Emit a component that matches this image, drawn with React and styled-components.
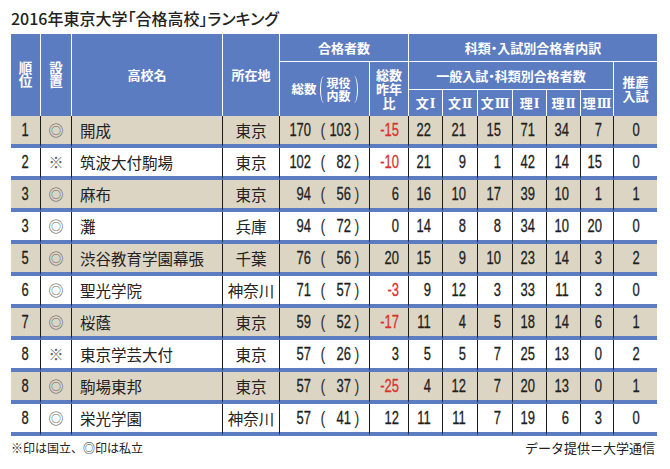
import React from "react";
import styled, { createGlobalStyle } from "styled-components";

const BLUE = "#5b7cc0";
const BEIGE = "#ddd5c4";
const JP = `"Noto Sans CJK JP", "Noto Sans", sans-serif`;
const NUM = `"Liberation Sans", Arial, sans-serif`;

const GlobalStyle = createGlobalStyle`
  body {
    margin: 0;
    background: #fff;
    font-family: ${JP};
  }
`;

const widths = [30, 31, 151, 57, 90, 39, 34, 35, 35, 34, 34, 33, 43];

const schools = [
  { rank: 1, mark: "◎", name: "開成", pref: "東京", total: 170, current: 103, diff: -15, scores: [22, 21, 15, 71, 34, 7], rec: 0 },
  { rank: 2, mark: "※", name: "筑波大付駒場", pref: "東京", total: 102, current: 82, diff: -10, scores: [21, 9, 1, 42, 14, 15], rec: 0 },
  { rank: 3, mark: "◎", name: "麻布", pref: "東京", total: 94, current: 56, diff: 6, scores: [16, 10, 17, 39, 10, 1], rec: 1 },
  { rank: 3, mark: "◎", name: "灘", pref: "兵庫", total: 94, current: 72, diff: 0, scores: [14, 8, 8, 34, 10, 20], rec: 0 },
  { rank: 5, mark: "◎", name: "渋谷教育学園幕張", pref: "千葉", total: 76, current: 56, diff: 20, scores: [15, 9, 10, 23, 14, 3], rec: 2 },
  { rank: 6, mark: "◎", name: "聖光学院", pref: "神奈川", total: 71, current: 57, diff: -3, scores: [9, 12, 3, 33, 11, 3], rec: 0 },
  { rank: 7, mark: "◎", name: "桜蔭", pref: "東京", total: 59, current: 52, diff: -17, scores: [11, 4, 5, 18, 14, 6], rec: 1 },
  { rank: 8, mark: "※", name: "東京学芸大付", pref: "東京", total: 57, current: 26, diff: 3, scores: [5, 5, 7, 25, 13, 0], rec: 2 },
  { rank: 8, mark: "◎", name: "駒場東邦", pref: "東京", total: 57, current: 37, diff: -25, scores: [4, 12, 7, 20, 13, 0], rec: 1 },
  { rank: 8, mark: "◎", name: "栄光学園", pref: "神奈川", total: 57, current: 41, diff: 12, scores: [11, 11, 7, 19, 6, 3], rec: 0 },
];

const subjects = [
  ["文", "Ⅰ"],
  ["文", "Ⅱ"],
  ["文", "Ⅲ"],
  ["理", "Ⅰ"],
  ["理", "Ⅱ"],
  ["理", "Ⅲ"],
];

const App = () => {
  return (
    <Page>
      <GlobalStyle />
      <Title>2016年東京大学「合格高校」ランキング</Title>
      <Table>
        <colgroup>
          {widths.map((w, i) => (
            <Col key={i} $w={w} />
          ))}
        </colgroup>
        <thead>
          <HeadRow $h={28}>
            <Th rowSpan={3}>
              <Vertical>順位</Vertical>
            </Th>
            <Th rowSpan={3}>
              <Vertical>設置</Vertical>
            </Th>
            <Th rowSpan={3}>高校名</Th>
            <Th rowSpan={3}>所在地</Th>
            <Th colSpan={2} $line>合格者数</Th>
            <Th colSpan={7} $line $last>科類・入試別合格者内訳</Th>
          </HeadRow>
          <HeadRow $h={28}>
            <Th rowSpan={2}>
              <PassHead>
                <span>総数</span>
                <Bracket />
                <SmallStack>現役<br />内数</SmallStack>
                <Bracket $right />
              </PassHead>
            </Th>
            <Th rowSpan={2}>
              <Stack>総数<br />昨年<br />比</Stack>
            </Th>
            <Th colSpan={6} $line>一般入試・科類別合格者数</Th>
            <Th rowSpan={2} $last>
              <Stack>推薦<br />入試</Stack>
            </Th>
          </HeadRow>
          <HeadRow $h={26}>
            {subjects.map(([k, r], i) => (
              <Th key={i}>
                {k}
                <Roman>{r}</Roman>
              </Th>
            ))}
          </HeadRow>
        </thead>
        <tbody>
          {schools.map((s, i) => (
            <Row key={i} $shade={i % 2 === 0}>
              <Td $align="center">
                <Num>{s.rank}</Num>
              </Td>
              <Td $align="center">
                <Mark>{s.mark}</Mark>
              </Td>
              <Td $align="left" $pad={8}>
                <Name>{s.name}</Name>
              </Td>
              <Td $align="center">
                <Name>{s.pref}</Name>
              </Td>
              <Td $align="left" $pad={0}>
                <Pass>
                  <Slot $w={31}>
                    <Num $origin="right">{s.total}</Num>
                  </Slot>
                  <Slot $w={23} $center>
                    <Paren>(</Paren>
                  </Slot>
                  <Slot $w={17}>
                    <Num $origin="right">{s.current}</Num>
                  </Slot>
                  <Slot $w={11} $center>
                    <Paren>)</Paren>
                  </Slot>
                </Pass>
              </Td>
              <Td $align="right" $pad={9}>
                <Num $origin="right" $red={s.diff < 0}>
                  {s.diff}
                </Num>
              </Td>
              {s.scores.map((v, j) => (
                <Td key={j} $align="right" $pad={11}>
                  <Num $origin="right">{v}</Num>
                </Td>
              ))}
              <Td $align="center" $last>
                <Num>{s.rec}</Num>
              </Td>
            </Row>
          ))}
        </tbody>
      </Table>
      <Footer>
        <Note>※印は国立、◎印は私立</Note>
        <Credit>データ提供＝大学通信</Credit>
      </Footer>
    </Page>
  );
};

const Page = styled.div`
  width: 646px;
  padding: 0 0 0 11px;
`;

const Title = styled.h1`
  margin: 0;
  padding: 8px 0 6px 0;
  font-family: ${JP};
  font-size: 16px;
  line-height: 20px;
  font-weight: 500;
  color: #222;
  font-feature-settings: "palt";
`;

const Table = styled.table`
  width: 646px;
  table-layout: fixed;
  border-collapse: separate;
  border-spacing: 0;
`;

const Col = styled.col`
  width: ${({ $w }) => $w}px;
`;

const HeadRow = styled.tr`
  height: ${({ $h }) => $h}px;
`;

const Th = styled.th`
  padding: 0;
  background: ${BLUE};
  color: #fff;
  font-family: ${JP};
  font-weight: 700;
  font-size: 13px;
  line-height: 14px;
  text-align: center;
  vertical-align: middle;
  white-space: nowrap;
  font-feature-settings: "palt";
  border-right: ${({ $last }) => ($last ? "none" : "1px solid #fff")};
  border-bottom: ${({ $line }) => ($line ? "1px solid #fff" : "none")};
`;

const Vertical = styled.span`
  display: inline-block;
  writing-mode: vertical-rl;
  text-orientation: upright;
  font-size: 13.5px;
  line-height: 14px;
`;

const Stack = styled.div`
  line-height: 14px;
`;

const PassHead = styled.div`
  display: inline-flex;
  align-items: center;
  gap: 3px;
  font-size: 12.5px;
`;

const SmallStack = styled.span`
  font-size: 12px;
  line-height: 13px;
`;

const Bracket = styled.span`
  width: 4px;
  height: 27px;
  box-sizing: border-box;
  border: 0 solid #fff;
  border-left-width: ${({ $right }) => ($right ? 0 : "1.5px")};
  border-right-width: ${({ $right }) => ($right ? "1.5px" : 0)};
  border-radius: ${({ $right }) =>
    $right ? "0 100% 100% 0 / 0 50% 50% 0" : "100% 0 0 100% / 50% 0 0 50%"};
`;

const Roman = styled.span`
  font-family: "DejaVu Serif", "Liberation Serif", ${JP};
  font-size: 12px;
  font-weight: 700;
  margin-left: 1px;
`;

const Row = styled.tr`
  background: ${({ $shade }) => ($shade ? BEIGE : "#fff")};
`;

const Td = styled.td`
  height: 28px;
  padding: 0 ${({ $align, $pad }) => ($align === "right" ? $pad || 0 : 0)}px 0
    ${({ $align, $pad }) => ($align === "left" ? $pad || 0 : 0)}px;
  text-align: ${({ $align }) => $align};
  vertical-align: middle;
  white-space: nowrap;
  border-bottom: 4px solid ${BLUE};
  border-right: ${({ $last }) => ($last ? "none" : "1px solid #1b1b1b")};
`;

const Num = styled.span`
  display: inline-block;
  font-family: ${NUM};
  font-size: 18px;
  line-height: 28px;
  color: ${({ $red }) => ($red ? "#d8322b" : "#1e1e1e")};
  -webkit-text-stroke: 0.3px currentColor;
  transform: scaleX(0.72);
  transform-origin: ${({ $origin }) => $origin || "center"};
`;

const Paren = styled.span`
  display: inline-block;
  font-family: ${NUM};
  font-size: 18px;
  line-height: 28px;
  color: #333;
  transform: scaleX(0.8);
`;

const Mark = styled.span`
  font-family: ${JP};
  font-size: 15px;
  line-height: 28px;
  color: #666;
`;

const Name = styled.span`
  font-family: ${JP};
  font-size: 15.5px;
  line-height: 28px;
  color: #222;
`;

const Pass = styled.div`
  display: flex;
  align-items: center;
  height: 28px;
`;

const Slot = styled.span`
  display: flex;
  width: ${({ $w }) => $w}px;
  flex: none;
  justify-content: ${({ $center }) => ($center ? "center" : "flex-end")};
`;

const Footer = styled.div`
  display: flex;
  justify-content: space-between;
  margin-top: 4px;
  line-height: 16px;
  color: #222;
  font-family: ${JP};
`;

const Note = styled.span`
  font-size: 12px;
`;

const Credit = styled.span`
  font-size: 13px;
  margin-right: 2px;
`;

export default App;
